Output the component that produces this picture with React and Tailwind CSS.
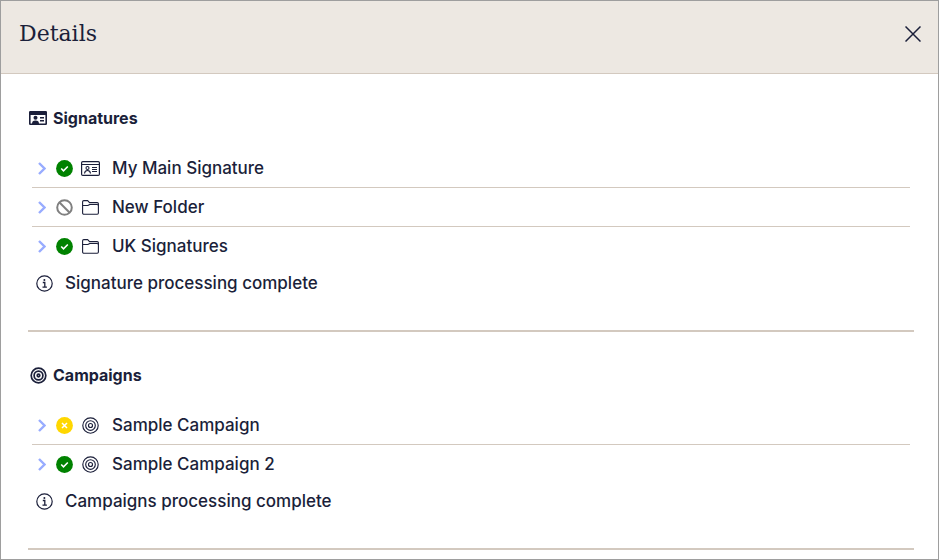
import React, { useState } from 'react';

const CardIcon = () => (
  <svg viewBox="0 0 19 15" className="h-[15px] w-[19px] shrink-0" fill="none" stroke="currentColor" aria-hidden="true">
    <rect x="0.6" y="0.6" width="17.8" height="13.8" rx="1.2" strokeWidth="1.2" />
    <path d="M1 3.500h17" strokeWidth="1" />
    <circle cx="6.5" cy="7" r="1.5" strokeWidth="1.100" />
    <path d="M3.500 12.500c.2-2 1.200-3 3-3s2.800 1 3 3" strokeWidth="1.100" />
    <path d="M11 6.500h5M11 8.500h5M11 10.500h5" strokeWidth="1" />
  </svg>
);

const SolidCardIcon = () => (
  <svg viewBox="0 0 18 14" className="h-[14px] w-[18px] shrink-0" fill="currentColor" aria-hidden="true">
    <path
      fillRule="evenodd"
      d="M1.200 0h15.600A1.200 1.200 0 0 1 18 1.200v11.600a1.200 1.200 0 0 1-1.200 1.200H1.200A1.200 1.200 0 0 1 0 12.800V1.200A1.200 1.200 0 0 1 1.200 0zM1.600 4v8.500h14.800V4z"
    />
    <circle cx="6.500" cy="6.800" r="2" />
    <path d="M3 13c0-2.600 1-3.600 3.500-3.600S10 10.400 10 13z" />
    <path d="M11 6h4v1.500h-4zM11 9h4v1.500h-4z" />
  </svg>
);

const FolderIcon = () => (
  <svg viewBox="0 0 17 15" className="h-[15px] w-[17px] shrink-0" fill="none" stroke="currentColor" strokeLinejoin="round" aria-hidden="true">
    <path d="M.6 13V1.800A1.200 1.200 0 0 1 1.800.6h3.900l1.800 2h7.700a1.200 1.200 0 0 1 1.200 1.200V13a1.200 1.200 0 0 1-1.200 1.200H1.800A1.200 1.200 0 0 1 .6 13z" strokeWidth="1.100" />
    <path d="M.6 5.500h5.200l2-1h7.400a1.200 1.200 0 0 1 1.200 1.200" strokeWidth="1.100" />
  </svg>
);

const TargetIcon = ({ bold }) => (
  <svg viewBox="0 0 17 17" className="h-[17px] w-[17px] shrink-0" fill="none" stroke="currentColor" strokeWidth={bold ? 1.700 : 1.150} aria-hidden="true">
    <circle cx="8.500" cy="8.500" r={bold ? 7.300 : 7.700} />
    <circle cx="8.500" cy="8.500" r={bold ? 4.400 : 4.800} />
    <circle cx="8.500" cy="8.500" r={bold ? 1.300 : 2} />
  </svg>
);

const InfoIcon = () => (
  <svg viewBox="0 0 17 17" className="h-[17px] w-[17px] shrink-0" fill="none" stroke="currentColor" aria-hidden="true">
    <circle cx="8.500" cy="8.500" r="7.700" strokeWidth="1.200" />
    <path d="M6.800 7.500h2v4.500M6.500 12.200h4.400" strokeWidth="1.300" />
    <circle cx="8.400" cy="4.900" r="1" fill="currentColor" stroke="none" />
  </svg>
);

const Chevron = () => (
  <svg viewBox="0 0 8 13" className="h-[13px] w-2 shrink-0 text-[#98acff]" fill="none" stroke="currentColor" strokeWidth="2.400" aria-hidden="true">
    <path d="M1 1l5.500 5.500L1 12" />
  </svg>
);

const statusIcons = {
  success: (
    <svg viewBox="0 0 17 17" className="h-[17px] w-[17px] shrink-0" role="img" aria-label="Success">
      <circle cx="8.500" cy="8.500" r="8.400" fill="#008200" />
      <path d="M5.200 8.500l2.300 2.300 4.300-4.300" fill="none" stroke="#fff" strokeWidth="1.600" />
    </svg>
  ),
  skipped: (
    <svg viewBox="0 0 17 17" className="h-[17px] w-[17px] shrink-0" role="img" aria-label="Skipped" fill="none" stroke="#808080" strokeWidth="2">
      <circle cx="8.500" cy="8.500" r="7.300" />
      <path d="M3.300 3.300l10.400 10.400" />
    </svg>
  ),
  warning: (
    <svg viewBox="0 0 17 17" className="h-[17px] w-[17px] shrink-0" role="img" aria-label="Warning">
      <circle cx="8.500" cy="8.500" r="8.400" fill="#ffd700" />
      <path d="M6 6l5 5M11 6l-5 5" fill="none" stroke="#fff" strokeWidth="1.500" />
    </svg>
  ),
};

const typeIcons = {
  signature: <CardIcon />,
  folder: <FolderIcon />,
  campaign: <TargetIcon />,
};

const sections = [
  {
    title: 'Signatures',
    icon: <SolidCardIcon />,
    items: [
      { name: 'My Main Signature', status: 'success', type: 'signature' },
      { name: 'New Folder', status: 'skipped', type: 'folder' },
      { name: 'UK Signatures', status: 'success', type: 'folder' },
    ],
    message: 'Signature processing complete',
  },
  {
    title: 'Campaigns',
    icon: <TargetIcon bold />,
    items: [
      { name: 'Sample Campaign', status: 'warning', type: 'campaign' },
      { name: 'Sample Campaign 2', status: 'success', type: 'campaign' },
    ],
    message: 'Campaigns processing complete',
  },
];

const Section = ({ title, icon, items, message }) => (
  <section className="border-b-2 border-[#d3c9bf] pt-[31px] pb-[29px]">
    <h2 className="flex h-6 items-center gap-[5px] text-base font-bold">
      <span className="flex w-5 justify-center">{icon}</span>
      {title}
    </h2>
    <ul className="mx-1 mt-[19px] divide-y divide-[#d3c9bf]">
      {items.map((item) => (
        <li key={item.name}>
          <button type="button" className="flex h-[38px] w-full items-center pl-1.5 text-left text-[17px] font-medium">
            <Chevron />
            <span className="ml-2.5">{statusIcons[item.status]}</span>
            <span className="mr-2 ml-[7px] flex w-5 justify-center">{typeIcons[item.type]}</span>
            <span className="ml-1 pt-0.5">{item.name}</span>
          </button>
        </li>
      ))}
    </ul>
    <p className="flex h-9 items-center gap-3 pl-2 text-[17px] font-medium">
      <InfoIcon />
      <span className="pt-0.5">{message}</span>
    </p>
  </section>
);

const App = () => {
  const [open, setOpen] = useState(true);
  if (!open) return null;

  return (
    <div
      role="dialog"
      aria-labelledby="details-title"
      className="min-h-screen border border-[#9e9e9e] bg-white font-['Inter',sans-serif] text-[#1b1f3a]"
    >
      <header className="flex h-[73px] items-start justify-between border-b border-[#d3c9bf] bg-[#ede8e2] pt-[17px] pr-[13px] pl-[18px]">
        <h1 id="details-title" className="font-['DejaVu_Serif',serif] text-[22px] leading-8">
          Details
        </h1>
        <button type="button" aria-label="Close" onClick={() => setOpen(false)} className="grid h-8 w-6 place-items-center">
          <svg viewBox="0 0 16 16" className="h-4 w-4" fill="none" stroke="currentColor" strokeWidth="1.500" aria-hidden="true">
            <path d="M.5.5l15 15M15.500.5l-15 15" />
          </svg>
        </button>
      </header>
      <main className="pt-px pr-6 pl-[27px]">
        {sections.map((section) => (
          <Section key={section.title} {...section} />
        ))}
      </main>
    </div>
  );
};

export default App;
